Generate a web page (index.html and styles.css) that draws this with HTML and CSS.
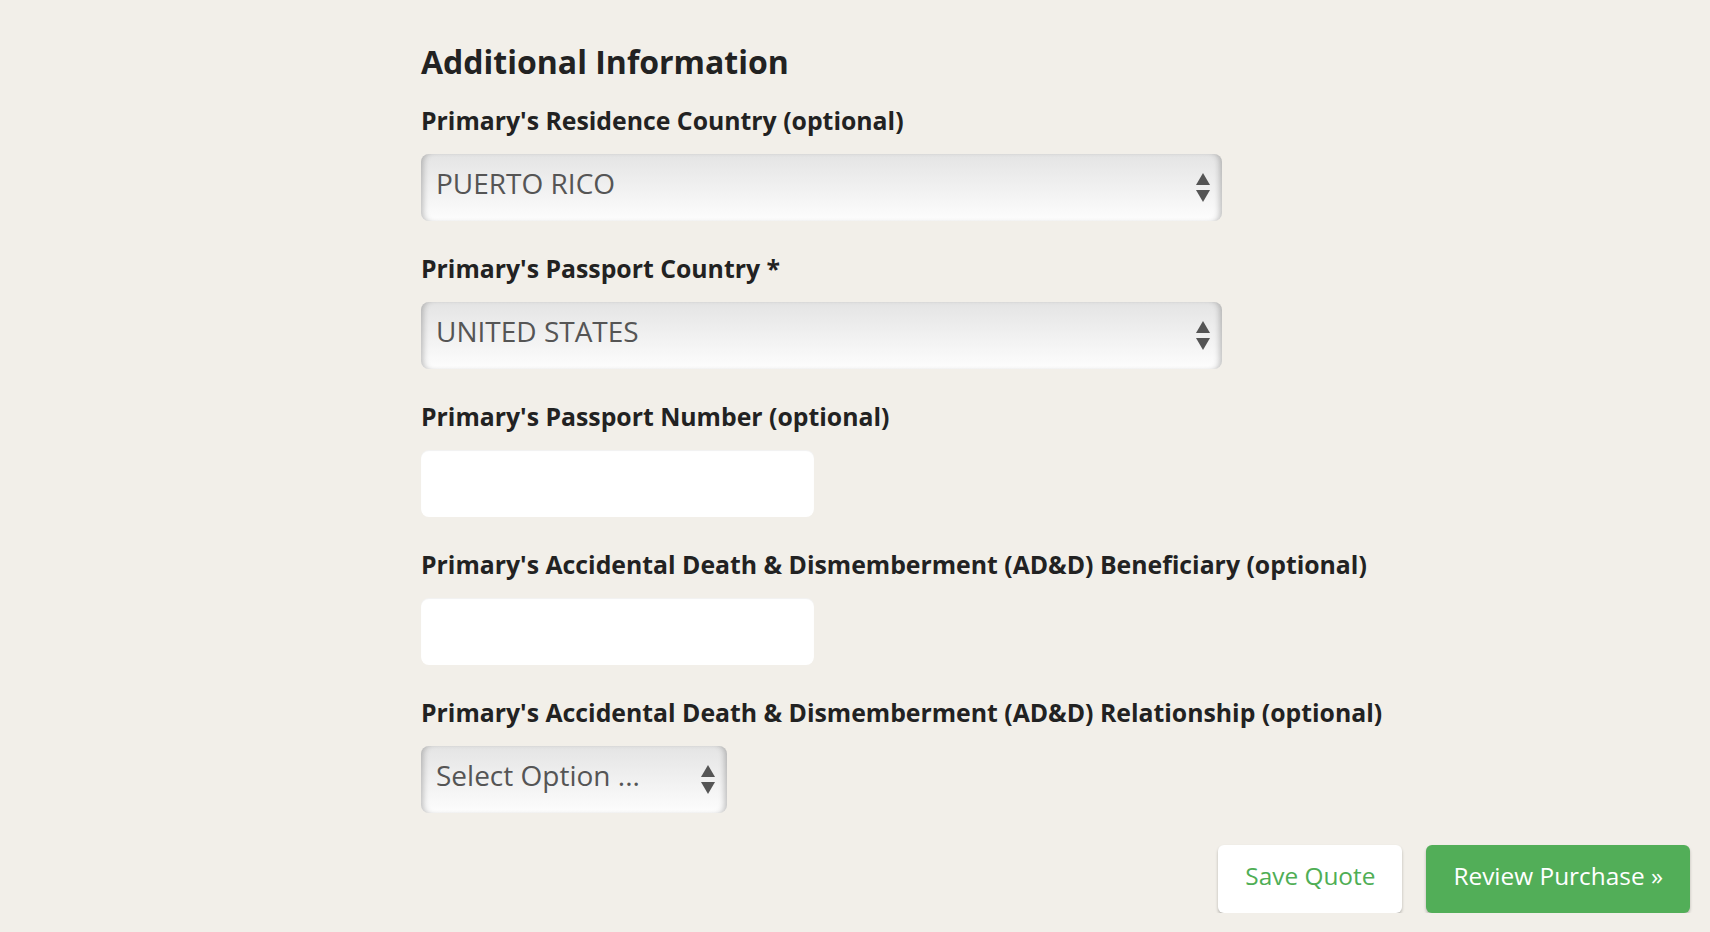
FILE: index.html
```html
<!DOCTYPE html>
<html lang="en">
<head>
    <meta charset="UTF-8">
    <meta name="viewport" content="width=device-width, initial-scale=1.0">
    <title>Additional Information</title>
    <link rel="stylesheet" href="styles.css">
</head>
<body>
    <div class="page">
        <h2 class="section-title">Additional Information</h2>

        <!-- Residence country -->
        <div class="field">
            <label class="field-label" for="residence">Primary's Residence Country (optional)</label>
            <div class="select-wrap select-wide">
                <select id="residence" class="select">
                    <option>PUERTO RICO</option>
                </select>
                <svg class="select-arrows" width="14" height="29" viewBox="0 0 14 29">
                    <path d="M7 0 L14 12 L0 12 Z" fill="#555"/>
                    <path d="M0 17 L14 17 L7 29 Z" fill="#555"/>
                </svg>
            </div>
        </div>

        <!-- Passport country -->
        <div class="field">
            <label class="field-label" for="passport-country">Primary's Passport Country *</label>
            <div class="select-wrap select-wide">
                <select id="passport-country" class="select">
                    <option>UNITED STATES</option>
                </select>
                <svg class="select-arrows" width="14" height="29" viewBox="0 0 14 29">
                    <path d="M7 0 L14 12 L0 12 Z" fill="#555"/>
                    <path d="M0 17 L14 17 L7 29 Z" fill="#555"/>
                </svg>
            </div>
        </div>

        <!-- Passport number -->
        <div class="field">
            <label class="field-label" for="passport-number">Primary's Passport Number (optional)</label>
            <input type="text" id="passport-number" class="text-input">
        </div>

        <!-- AD&D beneficiary -->
        <div class="field">
            <label class="field-label" for="beneficiary">Primary's Accidental Death &amp; Dismemberment (AD&amp;D) Beneficiary (optional)</label>
            <input type="text" id="beneficiary" class="text-input">
        </div>

        <!-- AD&D relationship -->
        <div class="field">
            <label class="field-label" for="relationship">Primary's Accidental Death &amp; Dismemberment (AD&amp;D) Relationship (optional)</label>
            <div class="select-wrap select-small">
                <select id="relationship" class="select">
                    <option>Select Option ...</option>
                </select>
                <svg class="select-arrows" width="14" height="29" viewBox="0 0 14 29">
                    <path d="M7 0 L14 12 L0 12 Z" fill="#555"/>
                    <path d="M0 17 L14 17 L7 29 Z" fill="#555"/>
                </svg>
            </div>
        </div>

        <div class="actions">
            <button class="btn btn-light">Save Quote</button>
            <button class="btn btn-green">Review Purchase &raquo;</button>
        </div>
    </div>
</body>
</html>
```

FILE: styles.css
```css
* {
    margin: 0;
    padding: 0;
    box-sizing: border-box;
}
body {
    font-family: "Open Sans", Lato, sans-serif;
    background: #f2efe9;
    color: #222;
    overflow: hidden;
}
.page {
    padding: 43px 20px 0 421px;
}
.section-title {
    font-size: 32px;
    line-height: 38px;
    font-weight: 700;
    margin-bottom: 24px;
}
.field {
    margin-bottom: 32px;
}
.field-label {
    display: block;
    font-size: 24.8px;
    line-height: 30px;
    font-weight: 700;
    margin-bottom: 19px;
}
.select-wrap {
    position: relative;
    height: 67px;
}
.select-wide {
    width: 801px;
}
.select-small {
    width: 306px;
}
.select {
    appearance: none;
    -webkit-appearance: none;
    width: 100%;
    height: 100%;
    border: none;
    border-radius: 8px;
    padding: 0 40px 10px 15px;
    font-family: inherit;
    font-size: 28px;
    color: #555;
    background: linear-gradient(#e4e4e4, #fdfdfd);
    box-shadow: inset 6px 0 6px -4px rgba(0, 0, 0, 0.25), inset -6px 0 6px -4px rgba(0, 0, 0, 0.25);
    outline: none;
}
.select-arrows {
    position: absolute;
    right: 12px;
    top: 19px;
    pointer-events: none;
}
.text-input {
    display: block;
    width: 393px;
    height: 67px;
    border: none;
    border-radius: 8px;
    background: #fff;
    box-shadow: inset 0 1px 1px rgba(0, 0, 0, 0.06);
    font-family: inherit;
    font-size: 24px;
    padding: 0 16px;
    outline: none;
}
.actions {
    display: flex;
    justify-content: flex-end;
    gap: 24px;
}
.btn {
    height: 68px;
    padding: 0 27px 8px;
    border: none;
    border-radius: 6px;
    font-family: inherit;
    font-size: 24.4px;
    cursor: pointer;
    box-shadow: 0 2px 3px rgba(0, 0, 0, 0.25);
}
.btn-light {
    background: #fff;
    color: #4fae55;
}
.btn-green {
    background: #52ae58;
    color: #fff;
}
```
